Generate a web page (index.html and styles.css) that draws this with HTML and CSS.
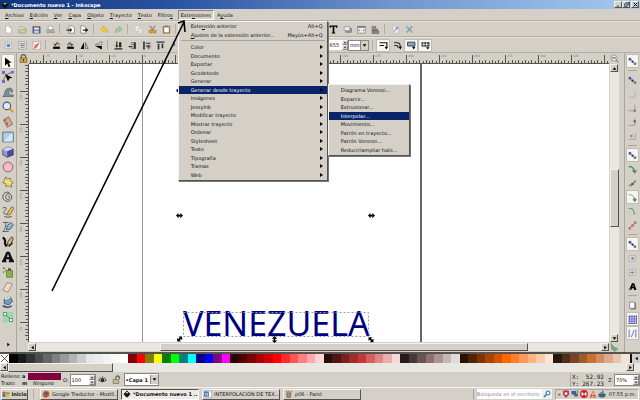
FILE: index.html
```html
<!DOCTYPE html>
<html lang="es">
<head>
    <meta charset="UTF-8">
    <meta name="viewport" content="width=device-width, initial-scale=1.0">
    <title>*Documento nuevo 1 - Inkscape</title>
    <link rel="stylesheet" href="styles.css">
</head>
<body>
    <svg class="symbols" aria-hidden="true">
        <symbol id="snap" viewBox="0 0 16 16"><path d="M3 4l10 9" stroke="#789" stroke-width="1.5"/><circle cx="3.500" cy="4" r="2.500" fill="#5350b8"/><circle cx="8" cy="8" r="2" fill="#223"/><circle cx="12.500" cy="12" r="2.500" fill="#5c8c6c"/></symbol>
        <symbol id="ink" viewBox="0 0 16 16"><path d="M8 1l7 7c0 2-4 2-3 4l-4 3-4-3c1-2-3-2-3-4z" fill="#111"/><path d="M8 3l3 3-2 1-1-1-2 1-1-1z" fill="#ddd"/></symbol>
        <symbol id="page" viewBox="0 0 16 16"><path d="M3 1.500h7l3 3v10H3z" fill="#fff" stroke="#999"/><path d="M10 1.500v3h3" fill="none" stroke="#999"/></symbol>
        <symbol id="handle" viewBox="0 0 16 16"><path d="M0 8l6-6v4h4V2l6 6-6 6v-4H6v4z"/></symbol>
        <symbol id="left" viewBox="0 0 8 8"><path d="M6 1v6L2 4z"/></symbol>
        <symbol id="right" viewBox="0 0 8 8"><path d="M2 1v6l4-3z"/></symbol>
        <symbol id="up" viewBox="0 0 8 8"><path d="M1 6h6L4 2z"/></symbol>
        <symbol id="down" viewBox="0 0 8 8"><path d="M1 2h6L4 6z"/></symbol>
    </svg>

    <div class="app">
        <header class="titlebar">
            <svg class="title-icon"><use href="#ink"/></svg>
            <h1>*Documento nuevo 1 - Inkscape</h1>
            <div class="window-buttons">
                <button aria-label="Minimizar"><svg viewBox="0 0 8 8"><path d="M1 6h4v1H1z"/></svg></button>
                <button aria-label="Restaurar"><svg viewBox="0 0 8 8"><path d="M3 1h4v3H6M1 3h4v4H1z" fill="none" stroke="#000"/></svg></button>
                <button class="close" aria-label="Cerrar"><svg viewBox="0 0 8 8"><path d="M1 1l6 6M7 1L1 7" stroke="#000" stroke-width="1.500"/></svg></button>
            </div>
        </header>

        <nav class="menubar">
            <button><u>A</u>rchivo</button>
            <button><u>E</u>dición</button>
            <button><u>V</u>er</button>
            <button><u>C</u>apa</button>
            <button><u>O</u>bjeto</button>
            <button><u>T</u>rayecto</button>
            <button><u>T</u>exto</button>
            <button>Filtro<u>s</u></button>
            <div class="menu-anchor">
                <button class="open">Exte<u>n</u>siones</button>
                <div class="menu">
                    <div class="menu-list recent">
                        <button>Exte<u>n</u>sión anterior<kbd>Alt+Q</kbd></button>
                        <button><u>A</u>justes de la extensión anterior...<kbd>Mayús+Alt+Q</kbd></button>
                    </div>
                    <hr>
                    <div class="menu-list groups">
                        <button class="more">Color</button>
                        <button class="more">Documento</button>
                        <button class="more">Exportar</button>
                        <button class="more">Gcodetools</button>
                        <button class="more">Generar</button>
                        <button class="more selected">Generar desde trayecto</button>
                        <button class="more">Imágenes</button>
                        <button class="more">JessyInk</button>
                        <button class="more">Modificar trayecto</button>
                        <button class="more">Mostrar trayecto</button>
                        <button class="more">Ordenar</button>
                        <button class="more">Stylesheet</button>
                        <button class="more">Texto</button>
                        <button class="more">Tipografía</button>
                        <button class="more">Tramas</button>
                        <button class="more">Web</button>
                    </div>
                    <div class="submenu">
                        <div class="menu-list options">
                            <button>Diagrama Voronoi...</button>
                            <button>Esparcir...</button>
                            <button>Extrusionar...</button>
                            <button class="selected">Interpolar...</button>
                            <button>Movimiento...</button>
                            <button>Patrón en trayecto...</button>
                            <button>Patrón Voronoi...</button>
                            <button>Reducir/ampliar halo...</button>
                        </div>
                    </div>
                </div>
            </div>
            <button>A<u>y</u>uda</button>
        </nav>

        <div class="toolbar">
            <button aria-label="Nuevo"><svg><use href="#page"/></svg></button>
            <button aria-label="Abrir"><svg viewBox="0 0 16 16"><path d="M2 14V3h5l1 2h5v9z" fill="#e8e6c8" stroke="#8a9a70"/><path d="M2 14l2-6h11l-2 6z" fill="#c9d3a2" stroke="#8a9a70"/></svg></button>
            <button aria-label="Guardar"><svg viewBox="0 0 16 16"><path d="M1.500 2.500h13v12h-13z" fill="#4a6ea8" stroke="#456"/><path d="M4 3h8v5H4z" fill="#fff"/><path d="M4 3h8v2H4z" fill="#c44"/><path d="M4 10h8v4H4z" fill="#d4d8dc"/></svg></button>
            <button aria-label="Imprimir"><svg viewBox="0 0 16 16"><path d="M4 2h8v7H4z" fill="#fff" stroke="#888"/><path d="M1.500 8.500h13v5h-13z" fill="#c4c6c8" stroke="#777"/><path d="M4 11h8" stroke="#666"/></svg></button>
            <span class="sep"></span>
            <button aria-label="Importar"><svg viewBox="0 0 16 16"><path d="M5 1.500h6l4 4v9H5z" fill="#fff" stroke="#555"/><path d="M1 8h6V5l4 4-4 4v-3H1z" fill="#222"/></svg></button>
            <button aria-label="Exportar"><svg viewBox="0 0 16 16"><path d="M1.500 1.500h6l3 4v9h-9z" fill="#fff" stroke="#555"/><path d="M5 8h5V5l5 4-5 4v-3H5z" fill="#222"/></svg></button>
            <span class="sep"></span>
            <button aria-label="Deshacer"><svg viewBox="0 0 16 16"><path d="M1 7l6-5v3c5 0 8 3 6 9-1-3-3-4-6-4v3z" fill="#f3d33b" stroke="#c29b18"/></svg></button>
            <button aria-label="Rehacer"><svg viewBox="0 0 16 16"><path d="M15 7L9 2v3C4 5 1 8 3 14c1-3 3-4 6-4v3z" fill="#a9c8a0" stroke="#88a583"/></svg></button>
            <span class="sep"></span>
            <button aria-label="Copiar"><svg viewBox="0 0 16 16"><path d="M2 1.500h8v10H2zM6 5.500h8v9H6z" fill="#f1f1ec" stroke="#bbb"/></svg></button>
            <button aria-label="Cortar"><svg viewBox="0 0 16 16"><path d="M3 1l7 9M13 1L6 10" stroke="#888" stroke-width="2"/><path d="M2 9h5v5H2zM9 9h5v5H9z" fill="#e9a43c" stroke="#a86a18"/></svg></button>
            <button aria-label="Pegar"><svg viewBox="0 0 16 16"><path d="M2 2.500h12v12H2z" fill="#b08840" stroke="#765a28"/><path d="M4 4h8v9H4z" fill="#fff"/><path d="M5 1h6v3H5z" fill="#777"/></svg></button>
            <span class="sep"></span>
            <span class="toolbar-gap"></span>
            <button aria-label="Texto y tipografía"><svg viewBox="0 0 16 16"><path d="M1 1h14v4h-2l-1-2H9.500v10l2 1v1h-7v-1l2-1V3H4L3 5H1z"/></svg></button>
            <button aria-label="Capas"><svg viewBox="0 0 16 16"><path d="M5 6h10v7H5z" fill="#999" stroke="#666"/><path d="M2 3h10v7H2z" fill="#eee" stroke="#777"/></svg></button>
            <button aria-label="Editor XML"><svg viewBox="0 0 16 16"><path d="M1.500 2.500h13v12h-13z" fill="#fff" stroke="#555"/><path d="M1 2h14v3H1z" fill="#777"/><path d="M6 7L3 9.500 6 12M10 7l3 2.500-3 2.500M7 9.500h2" fill="none" stroke="#444"/></svg></button>
            <button aria-label="Alinear"><svg viewBox="0 0 16 16"><path d="M2 1v14" stroke="#444"/><path d="M3 2h6v4H3z" fill="#b66"/><path d="M3 7h9v3H3zM3 11h11v4H3z" fill="#889" stroke="#555"/></svg></button>
            <span class="sep"></span>
            <button aria-label="Preferencias"><svg viewBox="0 0 16 16"><path d="M3 1.500h8l3 3v10H3z" fill="#eee" stroke="#aaa"/><path d="M5 12l6-7M8 5l4-1v4" fill="none" stroke="#8a9aa5" stroke-width="2"/></svg></button>
            <button aria-label="Propiedades"><svg viewBox="0 0 16 16"><path d="M2 2l12 12M13 2L3 13" stroke="#8fa3b3" stroke-width="3"/><path d="M1 5l4-4M11 14l3-3" stroke="#b8c3ca" stroke-width="2"/></svg></button>
        </div>

        <div class="toolbar">
            <button aria-label="Seleccionar todo"><svg viewBox="0 0 16 16"><path d="M2.500 2.500h11v11h-11z" fill="#eef" stroke="#789" stroke-dasharray="2 1"/><path d="M5 5h6v6H5z" fill="#5b8fb5"/></svg></button>
            <button aria-label="Seleccionar en capas"><svg viewBox="0 0 16 16"><path d="M1.500 1.500h13v13h-13z" fill="#eee" stroke="#555" stroke-dasharray="2 1"/><path d="M4 4h8v2H4zM4 7h8v2H4zM4 10h8v2H4z" fill="#888"/></svg></button>
            <button aria-label="Deseleccionar"><svg viewBox="0 0 16 16"><path d="M1.500 1.500h13v13h-13z" fill="#fff" stroke="#a55" stroke-dasharray="2 1"/><path d="M4 5h7v7H4z" fill="#e9b3a0"/><path d="M4 13l8-9" stroke="#c33" stroke-width="2"/></svg></button>
            <span class="sep"></span>
            <button aria-label="Rotar a la izquierda"><svg viewBox="0 0 16 16"><path d="M2 10h12v4H2z"/><path d="M6 8c-1-5 6-7 7-1M3 5l3 3 3-4" fill="none" stroke="#222" stroke-width="1.500"/><path d="M9 6h4v3H9z" fill="#e0c45a"/></svg></button>
            <button aria-label="Rotar a la derecha"><svg viewBox="0 0 16 16"><path d="M2 10h12v4H2z"/><path d="M10 8c1-5-6-7-7-1M13 5l-3 3-3-4" fill="none" stroke="#222" stroke-width="1.500"/><path d="M3 6h4v3H3z" fill="#7b9ec4"/></svg></button>
            <button aria-label="Reflejar horizontal"><svg viewBox="0 0 16 16"><path d="M7 2v12H1z"/><path d="M9.500 2.500v11h5z" fill="#ccc" stroke="#333"/></svg></button>
            <button aria-label="Reflejar vertical"><svg viewBox="0 0 16 16"><path d="M14 7V1L2 7z" fill="#ddd" stroke="#555"/><path d="M14 9v6L2 9z"/></svg></button>
            <span class="sep"></span>
            <button aria-label="Bajar al fondo"><svg viewBox="0 0 16 16"><path d="M1 13h14v2H1zM9 2h4v9H9zM4 1h2v7h2l-3 4-3-4h2z" fill="#222"/></svg></button>
            <button aria-label="Bajar"><svg viewBox="0 0 16 16"><path d="M1 9h7v2H1zM10 2h4v12h-4z" fill="#333"/><path d="M5 3h4M5 6h4M5 13h4" stroke="#333"/></svg></button>
            <button aria-label="Subir"><svg viewBox="0 0 16 16"><path d="M2 1h3v14H2zM7 3h8v2H7zM7 8h8v2H7z" fill="#333"/><path d="M12 6v9M9 12h6" stroke="#333"/></svg></button>
            <button aria-label="Subir al frente"><svg viewBox="0 0 16 16"><path d="M1 1h14v2H1zM3 5h3v10H3zM10 5h3v8h-3z" fill="#333"/></svg></button>
            <button class="overflow" aria-label="Más opciones">›</button>
            <span class="control-gap"></span>
            <input class="height-value" type="text" value=",655" aria-label="Altura">
            <span class="spin"><button aria-label="Aumentar"><svg><use href="#up"/></svg></button><button aria-label="Reducir"><svg><use href="#down"/></svg></button></span>
            <span class="select-box unit"><select aria-label="Unidad"><option>mm</option></select><svg><use href="#down"/></svg></span>
            <span class="sep"></span>
            <button class="pressed" aria-label="Escalar trazo"><svg viewBox="0 0 16 16"><path d="M1 3h13v8M1 8h8" fill="none" stroke="#111" stroke-width="2"/><path d="M10 10h6l-3 5z"/></svg></button>
            <button aria-label="Escalar esquinas"><svg viewBox="0 0 16 16"><path d="M2 3h6q5 0 5 8M2 8h4q3 0 3 4" fill="none" stroke="#222" stroke-width="2"/><path d="M10 10h6l-3 5z"/></svg></button>
            <button class="pressed" aria-label="Mover degradados"><svg viewBox="0 0 16 16"><path d="M1 2h13v7H1z" fill="#8aa4c8" stroke="#334" stroke-width="1.500"/><path d="M9 10h6l-3 5z"/></svg></button>
            <button class="pressed" aria-label="Mover patrones"><svg viewBox="0 0 16 16"><path d="M1 2h14v8H1z" fill="#333"/><path d="M2 6h12M5 2v8M10 2v8" stroke="#ddd" stroke-width="1.500"/><path d="M9 11h6l-3 4z"/></svg></button>
        </div>

        <main class="workspace">
            <div class="toolbox">
                <button class="pressed" aria-label="Seleccionar"><svg viewBox="0 0 16 16"><path d="M4 2v11l3-3 2 5 2-1-2-5h4z"/></svg></button>
                <button aria-label="Nodos"><svg viewBox="0 0 16 16"><path d="M2 15Q2 3 15 2" fill="none" stroke="#445"/><path d="M0 0h4v4H0zM12 0h4v3h-4zM0 12h4v4H0z" fill="#6b68d8"/><path d="M4 4l10 5-4 1-2 4z"/></svg></button>
                <button aria-label="Retocar"><svg viewBox="0 0 16 16"><path d="M1 14C5 12 2 4 9 3c5-1 6 3 4 6 0-3-4-4-4-1 0 4 3 4 6 4v2z" fill="#7f8c96" stroke="#566"/></svg></button>
                <button aria-label="Zoom"><svg viewBox="0 0 16 16"><path d="M10 10l4 4" stroke="#d3a321" stroke-width="3" stroke-linecap="round"/><circle cx="6.500" cy="6.500" r="5" fill="#dceaf8" stroke="#556" stroke-width="1.500"/></svg></button>
                <button aria-label="Medir"><svg viewBox="0 0 16 16"><path d="M2 5l7-4 5 10-7 4z" fill="#dba993" stroke="#80553f"/><path d="M3 6l3-1M5 10l3-1M6 12l2-1" stroke="#533"/></svg></button>
                <button aria-label="Rectángulo"><svg viewBox="0 0 16 16"><path d="M1 1.500h14v13H1z" fill="#a9cdea" stroke="#456"/><path d="M2 14L14 2v12z" fill="#d3e6f5"/></svg></button>
                <button aria-label="Caja 3D"><svg viewBox="0 0 16 16"><path d="M1 5l7-4 7 3v8l-8 3-6-3z" fill="#9799d0" stroke="#445"/><path d="M1 5l6 2 8-3-7-3z" fill="#cfd2f0"/><path d="M7 7v8l8-3V4z" fill="#494b93"/></svg></button>
                <button aria-label="Elipse"><svg viewBox="0 0 16 16"><circle cx="8" cy="8" r="6.500" fill="#f6b9c8" stroke="#745"/></svg></button>
                <button aria-label="Estrella"><svg viewBox="0 0 16 16"><path d="M5 1l2 3 4-1v3l4 3-3 2 1 4-4-2-4 1v-4L1 9l2-3z" fill="#f0dc78" stroke="#776329"/></svg></button>
                <button aria-label="Espiral"><svg viewBox="0 0 16 16"><path d="M8 8c1-2 3 0 2 2-2 3-6 1-5-3 1-5 8-4 8 1 0 6-8 8-11 3C-1 5 4 0 10 2" fill="none" stroke="#555" stroke-width="1.300"/></svg></button>
                <button aria-label="Lápiz"><svg viewBox="0 0 16 16"><path d="M1 3c4-3 6 0 3 3-4 4 0 5 3 5M3 14q5 2 10 0" fill="none" stroke="#333"/><path d="M7 12l1-4 5-7 3 2-5 8z" fill="#eec04b" stroke="#654"/></svg></button>
                <button aria-label="Pluma"><svg viewBox="0 0 16 16"><path d="M1 2h8M5 2q0 10-4 12h8" fill="none" stroke="#444"/><path d="M6 12l1-6 5-4 3 3-4 6z" fill="#8fb6d4" stroke="#345"/></svg></button>
                <button aria-label="Caligrafía"><svg viewBox="0 0 16 16"><path d="M1 2q4 2 3 8l2 4" fill="none" stroke="#111" stroke-width="3"/><path d="M7 13l1-6 5-6 2 2-3 8z" fill="#d6bd6e" stroke="#222"/><path d="M9 14l5-5" stroke="#222" stroke-width="2"/></svg></button>
                <button aria-label="Texto"><svg viewBox="0 0 16 16"><path d="M0 15v-2l1-1L6 1h4l5 11 1 1v2H9v-2h1l-1-2H6l-1 2h1v2zM6.500 8h3L8 4z" fill="#111"/></svg></button>
                <button aria-label="Aerosol"><svg viewBox="0 0 16 16"><path d="M6 6h8v9H6z" fill="#88b34a" stroke="#574"/><path d="M8 3h4v3H8z" fill="#555"/><path d="M1 2h3v2H1zM4 5h2v2H4zM1 7h2v2H1z" fill="#678b40"/></svg></button>
                <button aria-label="Borrador"><svg viewBox="0 0 16 16"><path d="M1 12L7 2l7 2-6 11z" fill="#f2d6cb" stroke="#876"/></svg></button>
                <button aria-label="Cubo de pintura"><svg viewBox="0 0 16 16"><path d="M1 13q7 4 12 0" stroke="#357" fill="none" stroke-width="2"/><path d="M3 4l8-3 3 6-5 5-6-2z" fill="#6d9fb8" stroke="#345"/><path d="M4 4q5-1 7-3" fill="none" stroke="#dee" stroke-width="2"/></svg></button>
                <button aria-label="Degradado"><svg viewBox="0 0 16 16"><path d="M1 1h14v14H1z" fill="#9cd6ac"/><path d="M4 4l8 8" stroke="#476"/><path d="M2 2h4v4H2zM10 10h4v4h-4z" fill="#e8fff0" stroke="#476"/></svg></button>
                <button class="expand" aria-label="Más herramientas"><svg class="tiny"><use href="#right"/></svg></button>
            </div>

            <div class="desk">
                <button class="lock" aria-label="Bloquear guías"><svg viewBox="0 0 16 16"><path d="M4 8V5q0-4 4-4t4 4v3" fill="none" stroke="#654" stroke-width="2"/><path d="M2 7h12v8H2z" fill="#dca72c" stroke="#543"/><path d="M8 9v4" stroke="#421" stroke-width="2"/></svg></button>
                <svg class="ruler" id="rulerX"></svg>
                <button class="lens" aria-label="Zoom de ventana"><svg viewBox="0 0 16 16"><circle cx="7" cy="7" r="5.500" fill="#eee" stroke="#666"/><path d="M5 5v4M9 5v4M7 6v2M11 11l4 4" stroke="#555" stroke-width="1.500"/></svg></button>

                <svg class="ruler" id="rulerY"></svg>
                <svg class="canvas">
                    <path d="M113.500 0v278" stroke="#999"/>
                    <path d="M392 0v278" stroke="#333" stroke-width="1.500"/>
                    <text class="art" x="154" y="272">VENEZUELA</text>
                    <rect x="154.500" y="248.500" width="185" height="24" fill="none" stroke="#99a" stroke-dasharray="2 2"/>
                    <use href="#handle" x="147" y="148" width="7" height="7"/>
                    <use href="#handle" x="339" y="148" width="7" height="7"/>
                    <use href="#handle" x="147" y="23" width="7" height="7"/>
                    <use href="#handle" x="147" y="272" width="7" height="7" transform="rotate(-45 150 275)"/>
                    <use href="#handle" x="243" y="272" width="7" height="7" transform="rotate(90 246 275)"/>
                    <use href="#handle" x="339" y="272" width="7" height="7" transform="rotate(45 342 275)"/>
                </svg>
                <div class="scroll vertical">
                    <button aria-label="Subir"><svg><use href="#up"/></svg></button>
                    <span class="track"><span class="thumb"></span></span>
                    <button aria-label="Bajar"><svg><use href="#down"/></svg></button>
                </div>

                <div class="scroll horizontal">
                    <button aria-label="Izquierda"><svg><use href="#left"/></svg></button>
                    <span class="track"><span class="thumb"></span></span>
                    <button aria-label="Derecha"><svg><use href="#right"/></svg></button>
                </div>
                <button class="cms" aria-label="Gestión de color"><svg viewBox="0 0 16 16"><path d="M2 1q4 8 12 9l-5 5-6-4z" fill="#7fa58c" stroke="#586"/></svg></button>
            </div>

            <div class="snapbar">
                <button class="pressed" aria-label="Activar ajuste"><svg><use href="#snap"/></svg></button>
                <hr>
                <button aria-label="Ajustar cajas"><svg><use href="#snap"/></svg></button>
                <button aria-label="Bordes"><svg viewBox="0 0 16 16"><path d="M13 2v11H2" fill="none" stroke="#999"/></svg></button>
                <button aria-label="Esquinas"><svg viewBox="0 0 16 16"><path d="M12 1v11H1" fill="none" stroke="#777"/><path d="M10 10h4v4h-4z" fill="#777"/></svg></button>
                <button aria-label="Puntos medios de bordes"><svg viewBox="0 0 16 16"><path d="M12 1v12H1" fill="none" stroke="#777"/><path d="M10 4h4v4h-4z" fill="#666"/></svg></button>
                <button aria-label="Centros"><svg viewBox="0 0 16 16"><path d="M13 2v11H2" fill="none" stroke="#888"/><path d="M4 5h4v4H4z" fill="#888"/></svg></button>
                <hr>
                <button class="pressed" aria-label="Ajustar nodos"><svg><use href="#snap"/></svg></button>
                <button aria-label="Trayectos"><svg viewBox="0 0 16 16"><path d="M1 3q9-1 11 9M8 9l4 5 3-5" fill="none" stroke="#3f8a4a" stroke-width="2"/></svg></button>
                <button aria-label="Intersecciones"><svg viewBox="0 0 16 16"><path d="M1 12L15 4M4 14Q8 9 13 2" fill="none" stroke="#587f58" stroke-width="1.500"/><path d="M6 7h4v4H6z" fill="#465"/></svg></button>
                <button class="pressed" aria-label="Nodos angulares"><svg viewBox="0 0 16 16"><path d="M1 3q9-1 11 9" fill="none" stroke="#69a273" stroke-width="1.500"/><path d="M12 8l4 4-4 4-4-4z" fill="#687"/></svg></button>
                <button aria-label="Nodos suaves"><svg viewBox="0 0 16 16"><path d="M1 3q9-3 10 9" fill="none" stroke="#69a273" stroke-width="2"/><path d="M9 9h4v4H9z" fill="#8a9"/></svg></button>
                <button aria-label="Puntos medios"><svg viewBox="0 0 16 16"><path d="M2 14L14 2" stroke="#a77" stroke-width="2"/><path d="M1 11h4v4H1zM6 6h4v4H6zM11 1h4v4h-4z" fill="#b66"/></svg></button>
                <hr>
                <button class="pressed" aria-label="Otros puntos"><svg><use href="#snap"/></svg></button>
                <button aria-label="Centros de objetos"><svg viewBox="0 0 16 16"><path d="M2 3h11v10H2z" fill="#ddd" stroke="#999"/><path d="M6 6h4v4H6z" fill="#777"/></svg></button>
                <button aria-label="Centros de rotación"><svg viewBox="0 0 16 16"><path d="M2 3h11v10H2z" fill="#ddd" stroke="#999"/><path d="M7.500 5v6M4 8h7" stroke="#555"/></svg></button>
                <button aria-label="Línea base"><svg viewBox="0 0 16 16"><path d="M2 14L7 2h4l4 12h-4l-1-3H7l-1 3zM8 9h2L9 5z"/><circle cx="3" cy="13" r="2" fill="#496"/></svg></button>
                <hr>
                <button aria-label="Borde de página"><svg viewBox="0 0 16 16"><path d="M5 3h9v12H5z" fill="#777"/><path d="M3 2h9v11H3z" fill="#fff" stroke="#555"/></svg></button>
                <button class="pressed" aria-label="Rejillas"><svg viewBox="0 0 16 16"><path d="M3 0v16M7 0v16M11 0v16M15 0v16M0 3h16M0 7h16M0 11h16M0 15h16" stroke="#5a59b8" stroke-width="1.500"/></svg></button>
                <button class="pressed" aria-label="Guías"><svg viewBox="0 0 16 16"><path d="M2 1v14M14 1v14M6 14l5-12" stroke="#5a59b8" stroke-width="1.500"/></svg></button>
            </div>
        </main>

        <div class="palette">
            <button class="none" aria-label="Ninguno"><svg viewBox="0 0 10 10"><path d="M1 1l8 8M9 1L1 9" stroke="#733"/></svg></button>
            <div class="swatches" id="swatches"></div>
            <button class="palette-menu" aria-label="Paletas"><svg><use href="#left"/></svg></button>
        </div>
        <div class="scroll palette-scroll">
            <button aria-label="Izquierda"><svg><use href="#left"/></svg></button>
            <span class="track"><span class="thumb"></span></span>
            <button aria-label="Derecha"><svg><use href="#right"/></svg></button>
        </div>

        <footer class="statusbar">
            <div class="fill-stroke">
                <span>Relleno:</span><b>a</b><span class="fill-color"></span>
                <span>Trazo:</span><b>m</b><i>Ninguno</i>
            </div>
            <label for="opacity">O:</label>
            <span class="field"><input id="opacity" type="text" value="100"><span class="spin"><button aria-label="Aumentar"><svg><use href="#up"/></svg></button><button aria-label="Reducir"><svg><use href="#down"/></svg></button></span></span>
            <button class="layer-toggle" aria-label="Mostrar capa"><svg viewBox="0 0 16 16"><path d="M1 9q7-7 14 0-7 6-14 0z" fill="#ccc" stroke="#333" stroke-width="1.500"/><circle cx="8" cy="9" r="3" fill="#222"/><path d="M3 4l2 2M8 2v3M13 4l-2 2" stroke="#333"/></svg></button>
            <button class="layer-toggle" aria-label="Bloquear capa"><svg viewBox="0 0 16 16"><path d="M7 8V4q1-3 4-2t2 5" fill="none" stroke="#555" stroke-width="2"/><path d="M2 8h10v7H2z" fill="#c8b98a" stroke="#654"/></svg></button>
            <span class="select-box layer"><select aria-label="Capa"><option>•Capa 1</option></select><svg><use href="#down"/></svg></span>
            <div class="coords"><span>X:</span><span>52.92</span><span>Y:</span><span>267.23</span></div>
            <label for="zoom">Z:</label>
            <span class="field"><input id="zoom" type="text" value="70%"><span class="spin"><button aria-label="Acercar"><svg><use href="#up"/></svg></button><button aria-label="Alejar"><svg><use href="#down"/></svg></button></span></span>
        </footer>

        <div class="taskbar">
            <button class="start"><svg viewBox="0 0 16 16"><path d="M1 4q3-2 6 0v4q-3-2-6 0z" fill="#d8432a"/><path d="M8 4q3 2 7 0v4q-4 2-7 0z" fill="#6aa82f"/><path d="M1 9q3-2 6 0v5q-3-2-6 0z" fill="#3a62c0"/><path d="M8 9q3 2 7 0v5q-4 2-7 0z" fill="#efbc2b"/></svg>Inicio</button>
            <span class="sep"></span>
            <button class="task"><svg viewBox="0 0 16 16"><circle cx="8" cy="8" r="7" fill="#e07a20"/><circle cx="8" cy="7" r="4" fill="#3a5fa8"/><path d="M1 8q3 5 9 2l3-6q3 8-5 11-6 0-7-7z" fill="#d34b1c"/></svg><span>Google Traductor - Mozill...</span></button>
            <button class="task active"><svg><use href="#ink"/></svg><span>*Documento nuevo 1 ...</span></button>
            <button class="task"><svg viewBox="0 0 16 16"><path d="M3 1.500h12v13H3z" fill="#fff" stroke="#68a"/><path d="M0 3h10v10H0z" fill="#3d6db5"/><path d="M2 5l1 6 2-5 2 5 1-6" fill="none" stroke="#fff"/></svg><span>INTERPOLACIÓN DE TEX...</span></button>
            <button class="task"><svg viewBox="0 0 16 16"><path d="M3 7h9l-1 8H4z" fill="#a98d60" stroke="#654"/><path d="M5 7L3 1M8 7V1M10 7l4-5" stroke="#864" stroke-width="2"/></svg><span>p06 - Paint</span></button>
            <div class="desktop-search">
                <input type="text" placeholder="Búsqueda en el escritoric" aria-label="Búsqueda en el escritorio">
                <button aria-label="Buscar"><svg viewBox="0 0 16 16"><circle cx="10" cy="6" r="4" fill="#dff" stroke="#36a" stroke-width="2"/><path d="M7 9l-5 5" stroke="#36a" stroke-width="3"/></svg></button>
            </div>
            <div class="tray">
                <button aria-label="Mostrar iconos ocultos">«</button>
                <svg viewBox="0 0 16 16"><path d="M2 2l6-2 6 2v7l-6 7-6-7z" fill="#c03848"/><circle cx="8" cy="7" r="3" fill="#e7dada"/></svg>
                <svg viewBox="0 0 16 16"><path d="M1 2h9v7H1z" fill="#3c55b8"/><path d="M6 7h8v6H6z" fill="#567"/><path d="M11 1h4v5h-4z" fill="#5db84c"/></svg>
                <svg viewBox="0 0 16 16"><circle cx="8" cy="8" r="8" fill="#d8202c"/><path d="M3 5h3v2h4V5h3v6h-3V9H6v2H3z" fill="#fff"/></svg>
                <svg viewBox="0 0 16 16"><path d="M8 1l7 14H1z" fill="#e4572e"/><path d="M8 5v5M8 12v2" stroke="#fff" stroke-width="2"/></svg>
                <svg viewBox="0 0 16 16"><path d="M1 7h14v6l-4 2H5l-4-2z" fill="#35657a"/><path d="M5 7V4h3V1h3v6" fill="#4c8095"/></svg>
                <time>07:55 p.m.</time>
            </div>
        </div>

        <svg class="arrow" aria-hidden="true"><path d="M52 291L184 22M178 23l6-2 1 11" fill="none" stroke="#000" stroke-width="1.600"/></svg>
    </div>

    <script src="script.js"></script>
</body>
</html>
```

FILE: styles.css
```css
:root {
    --face: #d4d0c8;
    --light: #f4f2ee;
    --shadow: #8a8780;
    --dark: #55534f;
    --select: #0a246a;
}

* {
    box-sizing: border-box;
}

body {
    margin: 0;
    font-family: "DejaVu Sans", sans-serif;
    font-size: 5px;
    line-height: 8px;
    color: #111;
    background-color: var(--face);
}

button, input, select, kbd {
    font: inherit;
    color: inherit;
    margin: 0;
    padding: 0;
    border: 0;
    border-radius: 0;
    background: none;
}

button {
    display: flex;
    align-items: center;
    justify-content: center;
    flex-shrink: 0;
}

hr {
    margin: 0;
    border: 0;
    border-top: 1px solid #aaa69e;
}

.symbols {
    position: absolute;
    width: 0;
    height: 0;
}

.app {
    position: relative;
    display: flex;
    flex-direction: column;
    height: 100vh;
    overflow: hidden;
}

/* Barra de título */
.titlebar {
    display: flex;
    align-items: center;
    gap: 2px;
    height: 9px;
    padding: 0 1px;
    color: white;
    background: linear-gradient(to right, #12337a, #2a55a4 28%, #6f92cc 60%, #a6caf0);
}

.title-icon {
    width: 8px;
    height: 8px;
}

.titlebar h1 {
    flex: 1;
    margin: 0;
    font-size: 5px;
    font-weight: bold;
}

.window-buttons {
    display: flex;
}

.window-buttons button {
    width: 8px;
    height: 7px;
    background-color: var(--face);
    border: 1px solid var(--light);
    border-right-color: var(--dark);
    border-bottom-color: var(--dark);
}

.window-buttons .close {
    margin-left: 1px;
}

.window-buttons svg {
    width: 5px;
    height: 5px;
}

/* Menús */
.menubar {
    display: flex;
    height: 12px;
    padding: 1px 2px;
    border-bottom: 1px solid #b3afa7;
}

.menubar > button, .open {
    padding: 0 3px;
    height: 10px;
}

u {
    text-decoration-thickness: 1px;
    text-underline-offset: 1px;
}

.menu-anchor {
    position: relative;
    margin-left: 2px;
}

.open {
    border: 1px solid var(--shadow);
    border-right-color: white;
    border-bottom-color: white;
    padding: 0 2px;
}

.menu, .submenu {
    position: absolute;
    z-index: 2;
    background-color: var(--face);
    border: 1px solid var(--light);
    border-right-color: var(--dark);
    border-bottom-color: var(--dark);
    box-shadow: 1px 1px 0 #777;
}

.menu {
    top: 11px;
    left: 0;
    width: 150px;
    padding-bottom: 1px;
}

.submenu {
    top: 62px;
    left: 149px;
    width: 82px;
    padding: 1px 0;
}

.menu-list {
    display: grid;
    grid-auto-rows: 1fr;
}

.recent {
    height: 17px;
}

.menu hr {
    margin: 1px 2px 2px;
}

.groups {
    height: 136px;
}

.options {
    height: 68px;
}

.menu-list button {
    justify-content: flex-start;
    padding: 0 4px 0 12px;
    white-space: nowrap;
}

.menu-list kbd {
    margin-left: auto;
}

.more::after {
    content: "";
    margin-left: auto;
    border: 2px solid transparent;
    border-left: 3px solid #000;
    border-right: 0;
}

.menu-list .selected {
    color: white;
    background-color: var(--select);
}

/* Barras de herramientas */
.toolbar {
    display: flex;
    align-items: center;
    height: 16px;
    padding: 0 1px;
    border-bottom: 1px solid #b3afa7;
    border-top: 1px solid #e6e3dd;
}

.toolbar button {
    width: 14px;
    height: 13px;
}

.toolbar button svg {
    width: 9px;
    height: 9px;
}

.sep {
    width: 1px;
    height: 10px;
    margin: 0 3px 0 2px;
    background-color: #b3afa7;
    flex-shrink: 0;
}

.toolbar-gap {
    width: 147px;
}

.control-gap {
    width: 145px;
}

.toolbar .overflow {
    width: 16px;
    padding-right: 2px;
    font-size: 8px;
}

.pressed {
    background-color: #f6f5f2;
    border: 1px solid #c0bcb4;
}

.height-value {
    width: 14px;
    height: 10px;
    background-color: white;
}

.spin {
    display: flex;
    flex-direction: column;
    width: 6px;
}

.spin button, .toolbar .spin button {
    width: 6px;
    height: 5px;
    background-color: var(--face);
    border: 1px solid var(--light);
    border-right-color: var(--shadow);
    border-bottom-color: var(--shadow);
}

.spin button svg, .toolbar .spin svg {
    width: 4px;
    height: 3px;
}

.select-box {
    display: flex;
    align-items: center;
    height: 11px;
    background-color: white;
    border: 1px solid var(--shadow);
}

.select-box select {
    appearance: none;
    flex: 1;
    min-width: 0;
    height: 9px;
    padding-left: 1px;
}

.select-box svg {
    width: 8px;
    height: 9px;
    padding: 2px 1px;
    background-color: var(--face);
    border-left: 1px solid var(--shadow);
}

.unit {
    width: 21px;
}

.unit + .sep {
    margin-left: 3px;
}

/* Área de trabajo */
.workspace {
    display: flex;
    flex: 1;
    min-height: 0;
}

.toolbox {
    display: flex;
    flex-direction: column;
    width: 17px;
    padding: 1px 1px 0;
    border-right: 1px solid #aaa69e;
}

.toolbox button {
    height: 15px;
}

.toolbox svg {
    width: 12px;
    height: 12px;
}

.toolbox .expand {
    margin-top: auto;
}

.toolbox .tiny {
    width: 5px;
    height: 5px;
}

.desk {
    display: grid;
    grid-template: 11px 1fr 10px / 12px 1fr 11px;
    flex: 1;
    min-width: 0;
}

.lock svg, .lens svg, .cms svg {
    width: 9px;
    height: 9px;
}

.ruler {
    width: 100%;
    height: 100%;
    font-size: 3px;
    fill: #777;
}

.canvas {
    width: 100%;
    height: 100%;
    overflow: visible;
    background-color: white;
}

.art {
    font-family: "Noto Sans", sans-serif;
    font-size: 34px;
    fill: #000080;
}

.scroll {
    display: flex;
}

.scroll button {
    width: 8px;
    height: 8px;
    background-color: var(--face);
    border: 1px solid var(--light);
    border-right-color: var(--dark);
    border-bottom-color: var(--dark);
}

.scroll svg {
    width: 5px;
    height: 5px;
}

.track {
    display: flex;
    flex: 1;
    background-color: #e9e7e2;
}

.thumb {
    background-color: var(--face);
    border: 1px solid var(--light);
    border-right-color: var(--dark);
    border-bottom-color: var(--dark);
}

.vertical {
    flex-direction: column;
    padding: 0 1px;
}

.vertical .track {
    flex-direction: column;
}

.vertical .thumb {
    margin-top: 97px;
    flex-basis: 58px;
}

.horizontal {
    grid-column: 1 / 3;
    padding: 1px 0 1px 11px;
}

.horizontal .thumb {
    width: 65%;
    margin-left: 22%;
}

.snapbar {
    display: flex;
    flex-direction: column;
    width: 16px;
    margin-left: 4px;
    padding: 1px 1px 0;
    border-left: 1px solid #aaa69e;
}

.snapbar button {
    height: 14px;
}

.snapbar svg {
    width: 9px;
    height: 9px;
}

.snapbar hr {
    margin: 2px;
}

/* Paleta */
.palette {
    display: flex;
    height: 11px;
    border-top: 2px solid var(--dark);
}

.none {
    width: 9px;
    background-color: white;
}

.none svg {
    width: 9px;
    height: 9px;
}

.swatches {
    display: flex;
    flex: 1;
    border-right: 2px solid #111;
}

.swatches button {
    flex: 1;
}

.palette-menu {
    width: 8px;
}

.palette-menu svg {
    width: 5px;
    height: 5px;
}

.palette-scroll {
    height: 9px;
    padding-right: 6px;
    background-color: #e9e7e2;
}

.palette-scroll .thumb {
    width: 17%;
}

/* Barra de estado */
.statusbar {
    display: flex;
    align-items: center;
    height: 15px;
}

.fill-stroke {
    display: grid;
    grid-template-columns: 21px 6px 33px;
    line-height: 7px;
    padding-left: 1px;
    margin-right: 2px;
}

.fill-color {
    background-color: #800040;
}

.fill-stroke i {
    padding-left: 5px;
}

.field {
    display: flex;
    align-items: center;
    margin-left: 1px;
    border: 1px solid var(--shadow);
    background-color: white;
}

.field input {
    width: 18px;
    height: 9px;
    padding-left: 1px;
}

.layer-toggle {
    width: 14px;
}

.layer-toggle svg {
    width: 9px;
    height: 9px;
}

.layer {
    width: 35px;
    height: 13px;
    font-weight: bold;
}

.coords {
    display: grid;
    grid-template-columns: 8px 24px;
    line-height: 7px;
    margin: 0 4px 0 auto;
    padding-left: 1px;
    border-left: 1px solid #aaa69e;
    font-family: "DejaVu Sans Mono", monospace;
    font-size: 6px;
}

.coords span:nth-child(even) {
    text-align: right;
}

/* Barra de tareas */
.taskbar {
    display: flex;
    align-items: center;
    gap: 3px;
    height: 13px;
    padding: 1px;
    border-top: 1px solid var(--light);
}

.start, .task {
    height: 11px;
    gap: 2px;
    background-color: var(--face);
    border: 1px solid var(--light);
    border-right-color: var(--dark);
    border-bottom-color: var(--dark);
}

.start {
    width: 27px;
    gap: 1px;
    font-weight: bold;
}

.start svg, .task svg {
    width: 8px;
    height: 8px;
    flex-shrink: 0;
}

.task {
    flex: 0 1 78px;
    min-width: 0;
    justify-content: flex-start;
    padding: 0 1px;
    white-space: nowrap;
    overflow: hidden;
}

.task.active {
    font-weight: bold;
    background-color: #eceae6;
    border-color: var(--dark) white white var(--dark);
}

.desktop-search {
    display: flex;
    align-items: center;
    height: 11px;
    margin-left: auto;
    padding-left: 3px;
    border-left: 1px solid #aaa69e;
}

.desktop-search input {
    width: 65px;
    height: 10px;
    background-color: white;
}

.desktop-search input::placeholder {
    color: #888;
    opacity: 1;
}

.desktop-search button {
    width: 10px;
    height: 10px;
    background-color: #efeeea;
}

.desktop-search svg {
    width: 8px;
    height: 8px;
}

.tray {
    display: flex;
    align-items: center;
    gap: 1px;
    height: 11px;
    padding: 0 2px;
    border: 1px solid #aaa69e;
    border-right-color: white;
    border-bottom-color: white;
}

.tray svg {
    width: 8px;
    height: 8px;
}

.tray time {
    margin-left: 2px;
}

/* Flecha dibujada sobre la ventana */
.arrow {
    position: absolute;
    z-index: 3;
    top: 0;
    left: 0;
    width: 100%;
    height: 100%;
    pointer-events: none;
}
```

FILE: script.js
```js
const colors = [
    "#000000", "#1a1a1a", "#333333", "#4d4d4d", "#666666", "#808080", "#999999",
    "#b3b3b3", "#cccccc", "#e6e6e6", "#ececec", "#f2f2f2", "#f9f9f9", "#ffffff",
    "#800000", "#ff0000", "#808000", "#ffff00", "#008000", "#00ff00",
    "#008080", "#00ffff", "#000080", "#0000ff", "#800080", "#ff00ff",
    "#2b0000", "#550000", "#800000", "#aa0000", "#d40000", "#ff0000",
    "#ff2a2a", "#ff5555", "#ff8080", "#ffaaaa", "#ffd5d5",
    "#280b0b", "#501616", "#782121", "#a02c2c", "#c83737", "#d35f5f", "#de8787", "#e9afaf", "#f4d7d7",
    "#241c1c", "#483737", "#6c5353", "#916f6f", "#ac9393", "#c8b7b7", "#e3dbdb",
    "#2b1100", "#552200", "#803300", "#aa4400", "#d45500", "#ff6600",
    "#ff7f2a", "#ff9955", "#ffb380", "#ffccaa", "#ffe6d5",
    "#28170b", "#502d16", "#784421", "#a05a2c", "#c87137", "#d38d5f", "#deaa87", "#e9c6af", "#f4e3d7"
];

const swatches = document.getElementById("swatches");
colors.forEach(color => {
    const button = document.createElement("button");
    button.style.backgroundColor = color;
    button.setAttribute("aria-label", color);
    swatches.appendChild(button);
});

// Marcas de las reglas: una grande cada 25 mm (33 px)
function drawRuler(id, vertical, start, value, step) {
    const ruler = document.getElementById(id);
    const length = vertical ? ruler.clientHeight : ruler.clientWidth;
    const depth = vertical ? 12 : 11;
    let path = "";
    let labels = "";
    for (let i = -10; start + i * 3.3 < length; i++) {
        const pos = Math.round(start + i * 3.3);
        if (pos < 0) continue;
        const size = i % 10 === 0 ? 9 : (i % 2 === 0 ? 4 : 3);
        path += vertical
            ? `M${depth - size} ${pos}.5H${depth}`
            : `M${pos}.5 ${depth - size}V${depth}`;
        // sin número si no cabe entero
        if (i % 10 === 0 && pos + 10 < length) {
            const text = value + i / 10 * step;
            labels += vertical
                ? `<text transform="translate(5 ${pos + 9}) rotate(-90)">${text}</text>`
                : `<text x="${pos + 2}" y="4">${text}</text>`;
        }
    }
    path += vertical ? `M${depth - 0.5} 0V${length}` : `M0 ${depth - 0.5}H${length}`;
    ruler.innerHTML = `<path d="${path}" stroke="#55534f" fill="none"/>${labels}`;
}

drawRuler("rulerX", false, 14, -75, 25);
drawRuler("rulerY", true, 27, 250, -25);
```
